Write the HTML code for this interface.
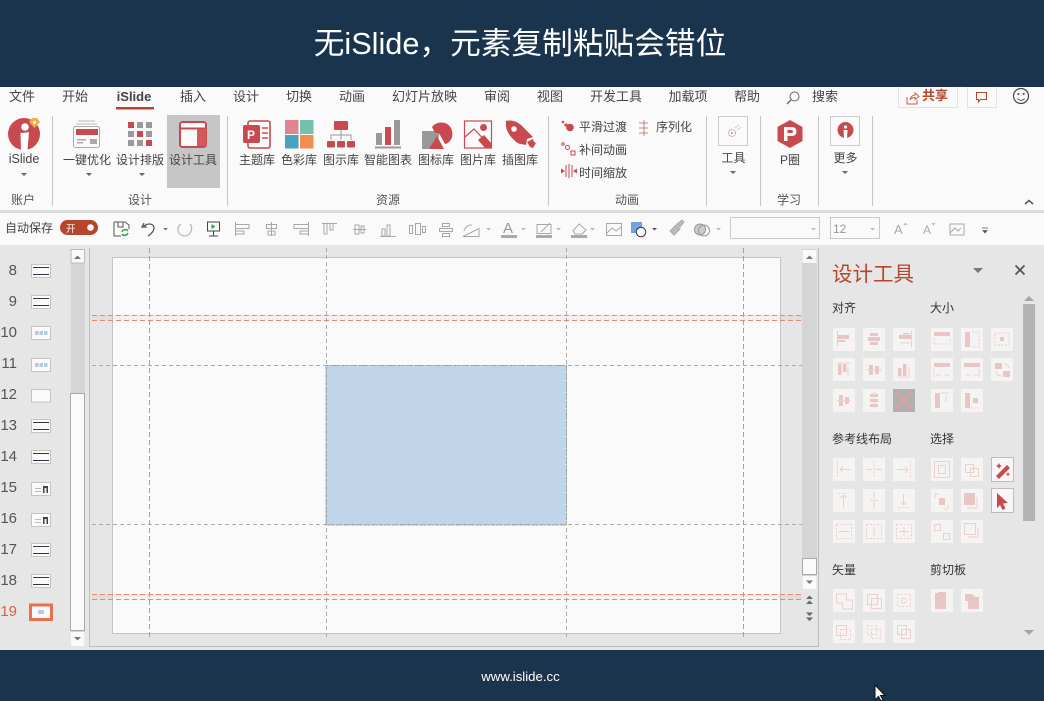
<!DOCTYPE html>
<html lang="zh"><head><meta charset="utf-8"><title>iSlide</title>
<style>
html,body{margin:0;padding:0;width:1044px;height:701px;overflow:hidden;background:#fff}
svg{display:block}
text{font-family:"Liberation Sans","Noto Sans CJK SC",sans-serif}
.tab{font-size:13px;fill:#444;text-anchor:middle}
.rb{font-size:12px;fill:#444;text-anchor:middle}
.grp{font-size:12px;fill:#555;text-anchor:middle}
.an{font-size:12px;fill:#444}
.num{font-size:15px;fill:#555;text-anchor:end}
.ph{font-size:12px;fill:#333}
.tile{fill:#f6f3f3}
.p{fill:#e9c6c6}
.ps{stroke:#ecd0d0;fill:none;stroke-width:1}
.pd{stroke:#ecd0d0;fill:none;stroke-width:1;stroke-dasharray:2 1.5}
.q{stroke:#a8a8a8;fill:none;stroke-width:1}
.sep{stroke:#c6c6c6;stroke-width:1}
.go{stroke:#e58a72;stroke-width:1;stroke-dasharray:5 3;fill:none}
.gg{stroke:#aaa;stroke-width:1;stroke-dasharray:4 3;fill:none}
</style></head><body>
<svg width="1044" height="701" viewBox="0 0 1044 701" xmlns="http://www.w3.org/2000/svg">
<defs>
<g id="th1"><rect x="-.5" y="-.5" width="19" height="13" fill="#fafafa" stroke="#c4c4c4"/><rect x="1" y="2" width="16" height="1" fill="#2e3a46"/><rect x="1" y="9" width="16" height="1" fill="#2e3a46"/></g>
<g id="th2"><rect x="-.5" y="-.5" width="19" height="13" fill="#fafafa" stroke="#c4c4c4"/><rect x="3" y="4" width="3.500" height="4" fill="#b7cbe0"/><rect x="7.500" y="4" width="3.500" height="4" fill="#b7cbe0"/><rect x="12" y="4" width="3.500" height="4" fill="#b7cbe0"/></g>
<g id="th3"><rect x="-.5" y="-.5" width="19" height="13" fill="#fafafa" stroke="#c4c4c4"/><rect x="3" y="5" width="6" height="1" fill="#bbb"/><rect x="3" y="8" width="6" height="1" fill="#bbb"/><rect x="11" y="3" width="5" height="7" fill="#3a4650"/><rect x="12.500" y="5" width="2" height="5" fill="#eee"/></g>
</defs>

<!-- frame -->
<rect width="1044" height="87" fill="#1a344e"/>
<rect y="87" width="1044" height="123" fill="#fafafa"/>
<rect y="210" width="1044" height="3" fill="#dcdcdc"/>
<rect y="213" width="1044" height="32" fill="#fafafa"/>
<rect y="245" width="1044" height="405" fill="#e6e6e6"/>
<rect y="650" width="1044" height="51" fill="#1a344e"/>
<text x="520" y="54" text-anchor="middle" font-size="30.700" fill="#fff">无iSlide，元素复制粘贴会错位</text>
<text x="520.500" y="681" text-anchor="middle" font-size="13.200" fill="#fff">www.islide.cc</text>
<path d="M875 685v15l3.500-3.500 2.500 4.500 2-1-2.500-4.500h4.500z" fill="#fff" stroke="#111"/>

<!-- tabs -->
<text class="tab" x="22" y="101">文件</text><text class="tab" x="75" y="101">开始</text>
<text class="tab" x="134" y="101" font-weight="bold" fill="#333">iSlide</text>
<rect x="116" y="107" width="38" height="2.500" fill="#b5452c"/>
<text class="tab" x="193" y="101">插入</text><text class="tab" x="246" y="101">设计</text><text class="tab" x="299" y="101">切换</text><text class="tab" x="352" y="101">动画</text><text class="tab" x="424.500" y="101">幻灯片放映</text><text class="tab" x="497" y="101">审阅</text><text class="tab" x="550" y="101">视图</text><text class="tab" x="616" y="101">开发工具</text><text class="tab" x="688" y="101">加载项</text><text class="tab" x="747" y="101">帮助</text><text class="tab" x="825" y="101">搜索</text>
<circle cx="794.500" cy="96.500" r="4.500" fill="none" stroke="#666"/><path d="M791 100l-4 4" stroke="#666" stroke-width="1.300"/>
<path d="M898.500 87v20.500h59V87M967.500 87v20.500h29V87" fill="#fafafa" stroke="#e3e3e3"/>
<path d="M907 97v7h10v-4M910 100c.5-3 2.500-5 5-5v-2l4 3.500-4 3v-2c-2 0-3.500.5-5 2.500z" fill="none" stroke="#c0604a"/>
<text x="922" y="100" font-size="13" font-weight="bold" fill="#b5452c">共享</text>
<path d="M976.500 92.500h10v7h-6l-2 2.500v-2.500h-2z" fill="none" stroke="#b5452c"/>
<circle cx="1021" cy="96" r="7.500" fill="none" stroke="#444" stroke-width="1.200"/><circle cx="1018.300" cy="94" r="1" fill="#444"/><circle cx="1023.700" cy="94" r="1" fill="#444"/><path d="M1017.500 98.500c2 2.500 5 2.500 7 0" fill="none" stroke="#444"/>

<!-- ribbon -->
<rect x="167" y="115" width="53" height="73" fill="#c6c6c6"/>
<g class="sep"><path d="M52.500 116v90M227.500 116v90M548.500 116v90M706.500 116v90M760.500 116v90M818.500 116v90M872.500 116v90"/></g>

<!-- iSlide logo -->
<circle cx="24" cy="134" r="16" fill="#c94a4e"/>
<circle cx="25" cy="127" r="3.800" fill="#fff"/><path d="M20.500 133c3 0 6-.5 8.500-1l-1.500 18h-6.500z" fill="#fff"/>
<path d="M29 122l3-4h5l3 4-5.500 6z" fill="#eeb04c"/><circle cx="34.500" cy="122.500" r="1.600" fill="#fff"/>
<!-- one key -->
<path d="M78 121h17M76 124h21" stroke="#bbb"/><rect x="73.500" y="126.500" width="26" height="21" rx="2" fill="#fafafa" stroke="#aaa"/><rect x="76" y="129" width="22" height="6" fill="#c94a4e"/><rect x="77" y="139" width="9" height="1.500" fill="#aaa"/><rect x="77" y="142" width="6" height="1.500" fill="#aaa"/><rect x="90" y="139" width="7" height="5" fill="#aaa"/>
<!-- grid -->
<g fill="#999"><rect x="128" y="122" width="6" height="6" fill="#c94a4e"/><rect x="137" y="122" width="6" height="6"/><rect x="146" y="122" width="6" height="6"/><rect x="128" y="131" width="6" height="6"/><rect x="137" y="131" width="6" height="6" fill="#c94a4e"/><rect x="146" y="131" width="6" height="6"/><rect x="128" y="140" width="6" height="6"/><rect x="137" y="140" width="6" height="6"/><rect x="146" y="140" width="6" height="6" fill="#c94a4e"/></g>
<!-- design tool -->
<rect x="180" y="122" width="26" height="25" rx="2.500" fill="#fafafa" stroke="#c94a4e" stroke-width="2"/><rect x="180" y="127.500" width="26" height="2" fill="#c94a4e"/><rect x="197" y="129" width="9" height="17" fill="#d4595d"/>
<!-- theme -->
<rect x="248" y="121" width="22" height="27" rx="2" fill="#fafafa" stroke="#c94a4e" stroke-width="1.600"/><rect x="243" y="125" width="17" height="18" rx="2" fill="#c94a4e"/><text x="247" y="139" font-size="12" font-weight="bold" fill="#fff">P</text><path d="M262 128h6M262 133h6M262 138h6" stroke="#c94a4e" stroke-width="1.500"/>
<!-- colors -->
<rect x="285" y="120" width="13.500" height="14" fill="#de8590"/><rect x="300" y="120" width="13.500" height="14" fill="#72c1ac"/><rect x="285" y="135" width="13.500" height="13.500" fill="#47a2bf"/><rect x="300" y="135" width="13.500" height="13.500" fill="#ee8f4e"/>
<!-- org -->
<rect x="334" y="121" width="14" height="9" rx="1" fill="#c94a4e"/><path d="M341 130v5M331 140v-5h20v5M341 135v5" stroke="#999" fill="none"/><rect x="327" y="141" width="8" height="6.500" rx="1" fill="#c94a4e"/><rect x="337" y="141" width="8" height="6.500" rx="1" fill="#c94a4e"/><rect x="347" y="141" width="8" height="6.500" rx="1" fill="#c94a4e"/>
<!-- chart -->
<rect x="376" y="133" width="6" height="12" fill="#999"/><rect x="385" y="127" width="6" height="18" fill="#c94a4e"/><rect x="394" y="120" width="6" height="25" fill="#999"/><rect x="375" y="146.500" width="26" height="2" fill="#999"/>
<!-- icon lib -->
<path d="M422 131h18l-4 18h-14z" fill="#999"/><path d="M432 127c5-7 18-6 20 4 2 8-4 13-7 13l-6-11h-4z" fill="#c94a4e"/><path d="M437 136l7 13h-15z" fill="#c94a4e"/>
<!-- picture -->
<rect x="464.500" y="121" width="27" height="27" fill="#fafafa" stroke="#c94a4e" stroke-width="1.200"/><circle cx="483.500" cy="127.500" r="3.500" fill="#c94a4e"/><path d="M465 137l9-8 16 17" fill="none" stroke="#c94a4e" stroke-width="1.200"/><path d="M478 140l6-5 7 8v5h-6z" fill="#c94a4e"/>
<!-- rocket -->
<path d="M506 121c7-2 14 2 18 7l9 9-6 2-1 6-5-1c-3 0-6-3-8-5-5-5-8-11-7-18z" fill="#c94a4e"/><circle cx="514" cy="129" r="2.800" fill="#fafafa"/><path d="M527 142l6-3 1 3 2 1-3 5-3-1z" fill="#c94a4e"/>
<!-- labels -->
<text class="rb" x="24" y="163" style="font-size:12.500px">iSlide</text>
<text class="rb" x="87" y="164">一键优化</text><text class="rb" x="140" y="164">设计排版</text><text class="rb" x="193" y="164">设计工具</text>
<text class="rb" x="257" y="164">主题库</text><text class="rb" x="299" y="164">色彩库</text><text class="rb" x="341" y="164">图示库</text><text class="rb" x="388" y="164">智能图表</text><text class="rb" x="436" y="164">图标库</text><text class="rb" x="478" y="164">图片库</text><text class="rb" x="520" y="164">插图库</text>
<path d="M21 173h6l-3 3zM86 173h6l-3 3zM139 173h6l-3 3zM730 171h6l-3 3zM842 171h6l-3 3z" fill="#666"/>
<text class="grp" x="23" y="204">账户</text><text class="grp" x="140" y="204">设计</text><text class="grp" x="388" y="204">资源</text><text class="grp" x="627" y="204">动画</text><text class="grp" x="789" y="204">学习</text>
<!-- animation -->
<circle cx="563" cy="122" r="1.300" fill="#c94a4e"/><circle cx="566" cy="125" r="1.600" fill="#c94a4e"/><circle cx="570" cy="127.500" r="3.800" fill="#c94a4e"/>
<text class="an" x="579" y="131">平滑过渡</text>
<path d="M644 120v16M639 123h9M639 128h9M639 133h9" stroke="#b98a84" fill="none"/><text class="an" x="656" y="131">序列化</text>
<circle cx="563" cy="144" r="1.300" fill="none" stroke="#c94a4e"/><circle cx="567.500" cy="147.500" r="2" fill="none" stroke="#c94a4e"/><rect x="571" y="151" width="4" height="4" fill="none" stroke="#c94a4e"/>
<text class="an" x="579" y="154">补间动画</text>
<path d="M566 165v12M569 164v14M572 165v12" stroke="#c94a4e" fill="none"/><path d="M565 171l-4-2.500v5zM573 171l4-2.500v5z" fill="#c94a4e"/>
<text class="an" x="579" y="177">时间缩放</text>
<!-- tools -->
<rect x="718.500" y="116.500" width="29" height="29" fill="#fafafa" stroke="#ccc"/>
<circle cx="732" cy="133" r="3.500" fill="none" stroke="#d58a92" stroke-dasharray="1.500 1"/><circle cx="732" cy="133" r="1" fill="#d58a92"/><path d="M735 128l4-3M737 130l4-3" fill="none" stroke="#e8c4c4"/>
<text class="rb" x="733.500" y="162">工具</text>
<path d="M777.500 127l12.500-7 12.500 7v14l-12.500 7-12.500-7z" fill="#c94a4e"/><path d="M784 127h8c6 0 6 9 0 9h-4.500v5H784zM787.500 130v3h4c2 0 2-3 0-3z" fill="#fafafa" fill-rule="evenodd"/>
<text class="rb" x="790" y="164">P圈</text>
<rect x="830.500" y="116.500" width="29" height="29" fill="#fafafa" stroke="#ccc"/>
<circle cx="845.500" cy="130" r="8" fill="#c94a4e"/><circle cx="845.500" cy="127" r="1.600" fill="#fff"/><path d="M843.500 130h4l-.5 8h-3z" fill="#fff"/>
<text class="rb" x="845.500" y="162">更多</text>
<path d="M1025 204l4-3.500 4 3.500" fill="none" stroke="#555" stroke-width="1.500"/>

<!-- QAT -->
<text x="5" y="232" font-size="12" fill="#444">自动保存</text>
<rect x="60" y="220" width="38" height="15" rx="7.500" fill="#b5452c"/>
<text x="66" y="232" font-size="9.500" fill="#fff">开</text><circle cx="90.500" cy="227.500" r="3.300" fill="#fff"/>
<path d="M114 222h11l4 3v4M114 222v14h7M118 222v5h5v-5" fill="none" stroke="#555"/><path d="M122 232c1-3 5-3 6-1M128 233c-1 3-5 3-6 1" fill="none" stroke="#2da44e" stroke-width="1.500"/>
<path d="M144 223l-2 4 5 0M143 227c5-5 11-3 11 1 0 3-3 6-6 8" fill="none" stroke="#555" stroke-width="1.300"/><path d="M163 228h5l-2.500 2.500z" fill="#777"/>
<path d="M190 224c3 3 2 11-5 12-8 0-9-9-4-12" fill="none" stroke="#bbb" stroke-width="1.300"/>
<rect x="207.500" y="222" width="12" height="9" fill="none" stroke="#444"/><path d="M213.500 231v5M209 236h9" stroke="#444"/><path d="M211.500 224l4 2.500-4 2.500z" fill="#2da44e"/>
<!-- align row -->
<g class="q">
<path d="M235.500 222v14M236 224.500h13v4h-13M236 231h8v3h-8"/>
<path d="M271.500 222v14M266.500 224.500h10v4h-10zM268 231h7v4h-7z"/>
<path d="M308.500 222v14M308 224.500h-14v4h14M308 231h-8v3h8"/>
<path d="M322 223.500h15M324 224v10h3v-10M330 224v6h3v-6"/>
<path d="M353 229.500h13M355 225h4v9h-4zM361 226h3v7h-3z"/>
<path d="M380 236.500h16M382 229h3v7h-3zM387 225h3v11h-3z"/>
<path d="M409.500 225.500h3v8h-3zM415.500 223.500h5v11h-5zM422.500 226.500h3v6h-3z"/>
<path d="M439.500 228.500h13v3h-13zM442.500 223.500h7v3h-7zM442.500 233.500h7v3h-7z"/>
<path d="M463 236.500l16-8v8zM464 231c1-4 4-6 8-6"/>
<path d="M537 224.500h14v9h-14zM541 232l9-9"/><path d="M573 231l6-7 7 6-4 4h-7z"/>
<path d="M606.500 223.500h15v12h-15zM607 233l5-5 4 3 5-4"/>
</g>
<text x="503" y="233" font-size="15" fill="#999">A</text>
<path d="M486 228h5l-2.500 2.500zM521 228h5l-2.500 2.500zM556 228h5l-2.500 2.500zM590 228h5l-2.500 2.500zM716 228h5l-2.500 2.500z" fill="#bbb"/>
<rect x="501" y="235" width="16" height="3" fill="#aaa"/><rect x="536" y="235" width="16" height="3" fill="#aaa"/><rect x="571" y="235" width="16" height="3" fill="#aaa"/>
<rect x="631" y="222" width="11" height="11" fill="#6ea5e0"/><circle cx="641" cy="232" r="4.800" fill="#fafafa" stroke="#333"/>
<path d="M652 228h5l-2.500 2.500z" fill="#555"/>
<path d="M670 231l6-6 4 4-6 6zM677 224l5-4 2 2-4 5z" fill="#bbb" stroke="#aaa"/>
<circle cx="700" cy="229.500" r="5.500" fill="#ccc" stroke="#999"/><circle cx="704" cy="230.500" r="5.500" fill="none" stroke="#999"/>
<rect x="730.500" y="217.500" width="89" height="21" fill="#fafafa" stroke="#c9c9c9"/><path d="M811 228h5l-2.500 2.500z" fill="#bbb"/>
<rect x="830.500" y="217.500" width="49" height="21" fill="#fafafa" stroke="#c9c9c9"/><text x="833" y="233" font-size="12" fill="#999">12</text><path d="M870 228h5l-2.500 2.500z" fill="#bbb"/>
<text x="894" y="234" font-size="13" fill="#aaa">A</text><path d="M904 225l1.500-1.500 1.500 1.500" stroke="#aaa" fill="none"/>
<text x="923" y="234" font-size="12" fill="#aaa">A</text><path d="M932 223l1.500 1.500 1.500-1.500" stroke="#aaa" fill="none"/>
<rect x="950" y="224" width="14" height="11" class="q"/><path d="M950 233l5-5 3 3 3-3" class="q"/>
<path d="M982 228h6M983 230.500h4l-2 2.500z" stroke="#555" stroke-width=".8" fill="#555"/>

<!-- thumbnails pane -->
<rect x="71" y="249" width="14" height="397" fill="#d5d5d5"/>
<rect x="71" y="249.500" width="13.500" height="13.500" fill="#fafafa" stroke="#bbb"/><path d="M74 259l3.500-3.500 3.500 3.500z" fill="#777"/>
<rect x="70.500" y="393.500" width="14" height="237" fill="#fafafa" stroke="#aaa"/>
<rect x="71" y="632" width="13.500" height="14" fill="#fafafa"/><path d="M74 637l3.500 3.500 3.500-3.500z" fill="#777"/>
<g>
<text class="num" x="17" y="275">8</text><use href="#th1" x="32" y="265"/>
<text class="num" x="17" y="306">9</text><use href="#th1" x="32" y="296"/>
<text class="num" x="17" y="337">10</text><use href="#th2" x="32" y="327"/>
<text class="num" x="17" y="368">11</text><use href="#th2" x="32" y="359"/>
<text class="num" x="17" y="399">12</text><rect x="31.500" y="389.500" width="19" height="12.500" fill="#fafafa" stroke="#c4c4c4"/>
<text class="num" x="17" y="430">13</text><use href="#th1" x="32" y="420"/>
<text class="num" x="17" y="461">14</text><use href="#th1" x="32" y="451"/>
<text class="num" x="17" y="492">15</text><use href="#th3" x="32" y="483"/>
<text class="num" x="17" y="523">16</text><use href="#th3" x="32" y="514"/>
<text class="num" x="17" y="554">17</text><use href="#th1" x="32" y="544"/>
<text class="num" x="17" y="585">18</text><use href="#th1" x="32" y="575"/>
<text class="num" x="17" y="616" style="fill:#d9614a">19</text>
<rect x="30.500" y="605" width="21" height="14.500" fill="#fafafa" stroke="#e8704f" stroke-width="3"/><rect x="38" y="610" width="6" height="4" fill="#b7cbe0"/>
</g>

<!-- canvas -->
<path d="M89.500 248v398.500H818.500V248" fill="none" stroke="#bdbdbd"/>
<rect x="112.500" y="257.500" width="668" height="376" fill="#fafafa" stroke="#c3c3c3"/>
<rect x="92" y="315" width="710" height="5" fill="#e8a08c" opacity=".13"/>
<rect x="92" y="594" width="710" height="5" fill="#e8a08c" opacity=".13"/>
<rect x="326" y="365.500" width="240.500" height="159.500" fill="#c0d5ea" stroke="#8ba0b8" stroke-dasharray="3 1"/>
<path class="gg" d="M326.500 248V640M566.500 248V640M92 365.500H802M92 524.500H802"/>
<path class="go" d="M149.500 248V640M743.500 248V640M92 315.500H802M92 320.500H802M92 594.500H802M92 599.500H802"/>

<!-- right scrollbar -->
<rect x="802" y="249" width="15" height="340" fill="#d5d5d5"/>
<rect x="802.500" y="250" width="14" height="13" fill="#fafafa"/><path d="M806 259l3.500-3.500 3.500 3.500z" fill="#777"/>
<rect x="802.500" y="558.500" width="14" height="16" fill="#fafafa" stroke="#aaa"/>
<rect x="802.500" y="576" width="14" height="13" fill="#fafafa"/><path d="M806 580.500l3.500 3.500 3.500-3.500z" fill="#777"/>
<path d="M806 599l3.500-3.500 3.500 3.500zM806 604l3.500-3.500 3.500 3.500z" fill="#666"/><path d="M806 612.500l3.500 3.500 3.500-3.500zM806 617.500l3.500 3.500 3.500-3.500z" fill="#666"/>

<!-- design panel -->
<text x="832" y="281" font-size="20.500" fill="#b5452c">设计工具</text>
<path d="M973 268h10l-5 5z" fill="#777"/><path d="M1015.500 265.500l9 9m0-9l-9 9" stroke="#555" stroke-width="1.800"/>
<rect x="1023" y="304" width="12" height="217" fill="#b3b3b3"/>
<path d="M1024 301l5-5 5 5zM1024 630h10l-5 5z" fill="#a5a5a5"/>
<g class="ph"><text x="832" y="312">对齐</text><text x="930" y="312">大小</text><text x="832" y="443">参考线布局</text><text x="930" y="443">选择</text><text x="832" y="574">矢量</text><text x="930" y="574">剪切板</text></g>

<!-- tiles -->
<g class="tile">
<rect x="833" y="328" width="22" height="23"/><rect x="863" y="328" width="22" height="23"/><rect x="893" y="328" width="22" height="23"/><rect x="931" y="328" width="22" height="23"/><rect x="961" y="328" width="22" height="23"/><rect x="991" y="328" width="22" height="23"/>
<rect x="833" y="358" width="22" height="23"/><rect x="863" y="358" width="22" height="23"/><rect x="893" y="358" width="22" height="23"/><rect x="931" y="358" width="22" height="23"/><rect x="961" y="358" width="22" height="23"/><rect x="991" y="358" width="22" height="23"/>
<rect x="833" y="389" width="22" height="23"/><rect x="863" y="389" width="22" height="23"/><rect x="931" y="389" width="22" height="23"/><rect x="961" y="389" width="22" height="23"/>
<rect x="833" y="458" width="22" height="23"/><rect x="863" y="458" width="22" height="23"/><rect x="893" y="458" width="22" height="23"/><rect x="931" y="458" width="22" height="23"/><rect x="961" y="458" width="22" height="23"/>
<rect x="833" y="489" width="22" height="23"/><rect x="863" y="489" width="22" height="23"/><rect x="893" y="489" width="22" height="23"/><rect x="931" y="489" width="22" height="23"/><rect x="961" y="489" width="22" height="23"/>
<rect x="833" y="520" width="22" height="23"/><rect x="863" y="520" width="22" height="23"/><rect x="893" y="520" width="22" height="23"/><rect x="931" y="520" width="22" height="23"/><rect x="961" y="520" width="22" height="23"/>
<rect x="833" y="589" width="22" height="23"/><rect x="863" y="589" width="22" height="23"/><rect x="893" y="589" width="22" height="23"/><rect x="931" y="589" width="22" height="23"/><rect x="961" y="589" width="22" height="23"/>
<rect x="833" y="620" width="22" height="23"/><rect x="863" y="620" width="22" height="23"/><rect x="893" y="620" width="22" height="23"/>
</g>
<rect x="893" y="389" width="22" height="23" fill="#b3aeae"/>
<path d="M896 392l16 17m0-17l-16 17" stroke="#d3a5a5" stroke-width="3"/>
<rect x="991.500" y="457.500" width="22" height="24" fill="#f8f6f6" stroke="#bcbcbc"/>
<rect x="991.500" y="488.500" width="22" height="24" fill="#f8f6f6" stroke="#bcbcbc"/>
<path d="M996 476l11-11 3 3-11 11z" fill="#c94a4e"/><path d="M999 463l1 2 2 1-2 1-1 2-1-2-2-1 2-1zM1008 472l.7 1.500 1.500.7-1.500.7-.7 1.500-.7-1.500-1.500-.7 1.500-.7z" fill="#c94a4e"/>
<path d="M997 493l11 10-5 .5 2.500 5-3 1.500-2.500-5-3 3z" fill="#c94a4e"/>
<!-- row 1 -->
<path class="ps" d="M837.500 331v16"/><rect class="p" x="838" y="335" width="11" height="4"/><rect class="p" x="838" y="340" width="7" height="2"/>
<rect class="p" x="870" y="333" width="8" height="3"/><rect class="p" x="868" y="337" width="12" height="4"/><rect class="p" x="870" y="342" width="8" height="3"/>
<path class="ps" d="M911.500 331v16"/><rect class="p" x="899" y="335" width="12" height="4"/><rect class="p" x="903" y="333" width="7" height="1.500"/><path class="ps" d="M900 343h10"/>
<rect class="p" x="934" y="332" width="16" height="4"/><path class="pd" d="M934 338v6h16v-6"/>
<rect class="p" x="965" y="332" width="5" height="15"/><path class="pd" d="M972 332h7v15h-7"/>
<path class="pd" d="M995 333h14v12h-14z"/><rect class="p" x="1000" y="337" width="4" height="4"/>
<!-- row 2 -->
<path class="ps" d="M837 363h14M848 367v9"/><rect class="p" x="838" y="364" width="3.500" height="11"/><rect class="p" x="843" y="364" width="3.500" height="8"/>
<rect class="p" x="869" y="365" width="4" height="10"/><rect class="p" x="875" y="366" width="4" height="8"/><path class="ps" d="M866 370h16"/>
<rect class="p" x="898" y="368" width="3.500" height="8"/><rect class="p" x="903" y="364" width="3.500" height="12"/><path class="ps" d="M897 377h14M909 367v9"/>
<rect class="p" x="934" y="363" width="16" height="4"/><path class="ps" d="M934 369v8M936 375h5M945 375h4"/>
<rect class="p" x="964" y="363" width="16" height="4"/><path class="ps" d="M979 369v8M966 375h4M974 375h4"/>
<rect class="p" x="995" y="363" width="7" height="6"/><rect class="p" x="1003" y="371" width="7" height="6"/><path class="ps" d="M1004 364c3 0 5 2 5 4M996 371c0 3 2 5 5 5"/>
<!-- row 3 -->
<rect class="p" x="839" y="395" width="4" height="11"/><rect class="p" x="845" y="397" width="4" height="7"/><path class="ps" d="M837 400.500h14"/>
<rect class="p" x="870" y="394" width="8" height="3"/><rect class="p" x="870" y="399" width="8" height="3"/><rect class="p" x="870" y="404" width="8" height="3"/><path class="ps" d="M874 392v17"/>
<rect class="p" x="935" y="393" width="5" height="15"/><path class="ps" d="M941 393h8M946 395v7"/>
<rect class="p" x="965" y="393" width="5" height="15"/><rect class="p" x="973" y="398" width="5" height="5"/><path class="pd" d="M971 408h8"/>
<!-- row guides -->
<path class="pd" d="M837.500 461v17"/><path class="ps" d="M840 469.500h11M840 469.500l3-3M840 469.500l3 3"/>
<path class="pd" d="M874 461v17"/><path class="ps" d="M866 469.500h6M876 469.500h6"/>
<path class="pd" d="M910.500 461v17"/><path class="ps" d="M897 469.500h11M908 469.500l-3-3M908 469.500l-3 3"/>
<rect class="ps" x="934.500" y="461.500" width="15" height="16"/><rect class="ps" x="938.500" y="465.500" width="7" height="8"/>
<rect class="ps" x="965.500" y="464.500" width="8" height="8"/><rect class="ps" x="970.500" y="468.500" width="8" height="8"/>
<path class="pd" d="M838 493.500h11"/><path class="ps" d="M843.500 495v12M843.500 495l-3 3M843.500 495l3 3"/>
<path class="ps" d="M874 492v6M874 502v6M870 500.500h8"/>
<path class="pd" d="M898 507.500h11"/><path class="ps" d="M903.500 494v11M903.500 505l-3-3M903.500 505l3-3"/>
<path class="ps" d="M935 494h4M935 494v4M948 509h-4M948 509v-4"/><rect class="p" x="939" y="498" width="6" height="7"/>
<rect class="p" x="964" y="493" width="11" height="12"/><path class="ps" d="M977 497v11h-10"/>
<path class="pd" d="M836.500 524.500h15v14h-15z"/><path class="ps" d="M839 531.500h10"/>
<path class="pd" d="M866.500 524.500h15v14h-15z"/><path class="ps" d="M874 527v9"/>
<path class="pd" d="M896.500 524.500h15v14h-15z"/><path class="ps" d="M899 531.500h10M904 527v9"/>
<rect class="ps" x="934.500" y="524.500" width="6" height="6"/><rect class="ps" x="943.500" y="533.500" width="6" height="6"/>
<rect class="ps" x="964.500" y="523.500" width="11" height="11"/><path class="ps" d="M978 527v10h-10" stroke-width="2"/>
<!-- vector -->
<path class="ps" d="M836.500 594h10v6h6v9h-10v-6h-6z"/>
<rect class="ps" x="867.500" y="594.500" width="10" height="10"/><rect class="ps" x="871.500" y="598.500" width="10" height="10"/>
<rect class="pd" x="897.500" y="594.500" width="13" height="12"/><circle class="ps" cx="904" cy="600.500" r="2.500"/>
<path class="p" d="M935 593h3v-1h8v17h-11z"/><path class="p" d="M965 594h7l3 3h4v12h-11v-8h-3z"/>
<rect class="ps" x="836.500" y="625.500" width="10" height="10"/><rect class="pd" x="840.500" y="629.500" width="10" height="10"/>
<rect class="pd" x="867.500" y="625.500" width="9" height="9"/><rect class="pd" x="871.500" y="629.500" width="9" height="9"/>
<rect class="ps" x="897.500" y="625.500" width="9" height="9"/><rect class="ps" x="901.500" y="629.500" width="9" height="9"/>
</svg>
</body></html>
